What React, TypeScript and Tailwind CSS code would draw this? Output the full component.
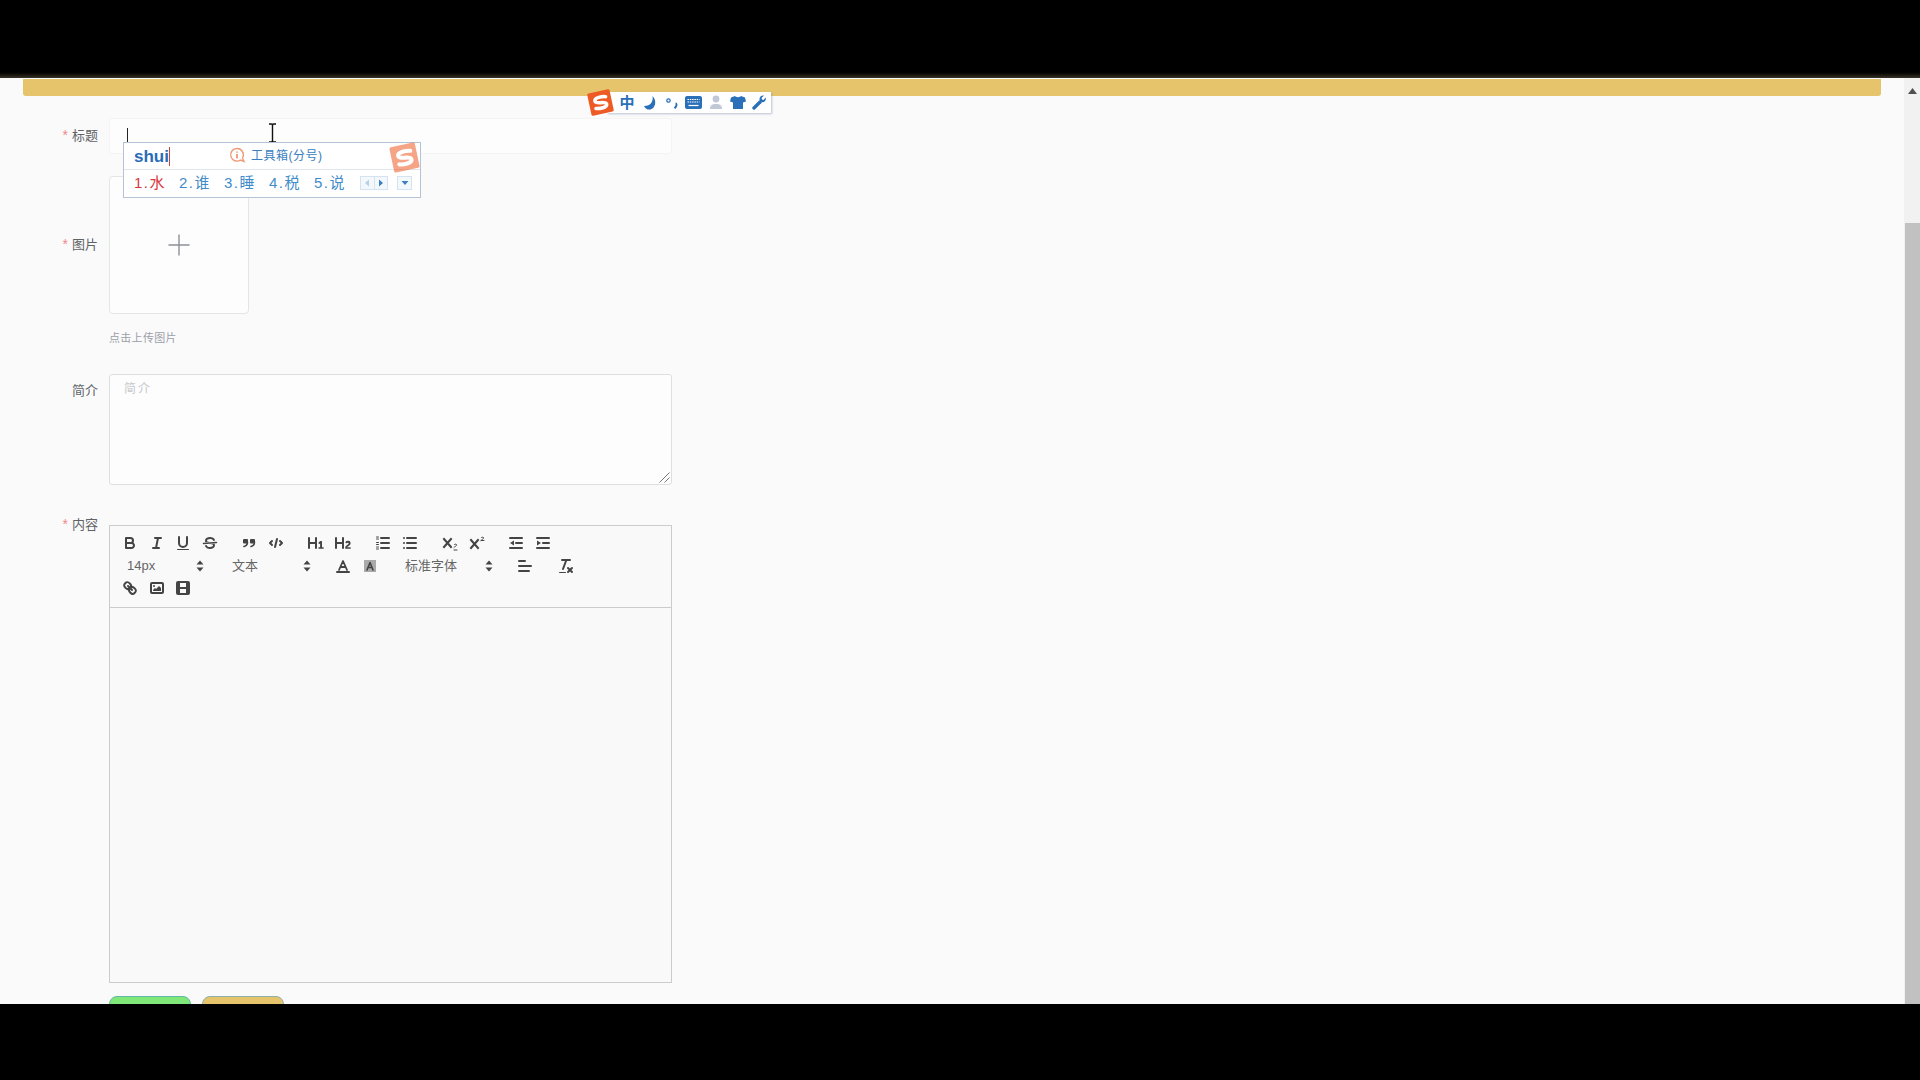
import React from "react";

const cjk = "font-['Liberation_Sans','Noto_Sans_CJK_SC',sans-serif]";

function Q({ children, w = 26.5 }: { children: React.ReactNode; w?: number }) {
  return (
    <span className="flex items-center justify-center h-[22px] shrink-0" style={{ width: w }}>
      <svg width="18" height="18" viewBox="0 0 18 18" fill="none" stroke="#444" strokeWidth="2" strokeLinecap="round" strokeLinejoin="round">
        {children}
      </svg>
    </span>
  );
}

function Fill({ d }: { d: string }) {
  return <path d={d} fill="#444" stroke="none" />;
}

function Arrows() {
  return (
    <svg width="8" height="12" viewBox="0 0 8 12" fill="#444">
      <polygon points="4,0.5 7.5,4.5 0.5,4.5" />
      <polygon points="4,11.5 7.5,7.5 0.5,7.5" />
    </svg>
  );
}

function Picker({ label, w, arrowRight, pl }: { label: string; w: number; arrowRight: number; pl: number }) {
  return (
    <span className="relative flex items-center h-[22px] shrink-0 text-[13px] text-[#666]" style={{ width: w, paddingLeft: pl }}>
      <span>{label}</span>
      <span className="absolute top-[5px] flex" style={{ right: arrowRight }}>
        <Arrows />
      </span>
    </span>
  );
}

function SLogo({ size, opacity = 1 }: { size: number; opacity?: number }) {
  return (
    <svg width={size} height={size} viewBox="0 0 28 28" style={{ opacity }}>
      <g transform="rotate(-12 14 14)">
        <rect x="3" y="3" width="22" height="22" rx="1.5" fill="#ee5a24" />
        <path d="M20 9.5C17 8.6 9 8 9 11.6c0 3.6 10.5 1.6 10.5 5.2 0 3.4-7.5 3-11 2" fill="none" stroke="#fff" strokeWidth="3.4" strokeLinecap="round" />
      </g>
    </svg>
  );
}

function Label({ text, star = true }: { text: string; star?: boolean }) {
  return (
    <div className="w-[75px] mr-[11px] shrink-0 text-right text-[13px] leading-[18px] text-[#606266]">
      {star && <span className="text-[#f08a8a] text-[14px] mr-[4px]">*</span>}
      {text}
    </div>
  );
}

function Toolbar() {
  return (
    <div className="h-[82px] border-b border-[#ccc] pl-[7px] pt-[6px] flex flex-col">
      <div className="flex h-[22px] items-center">
        <Q><path d="M5,4H9.5A2.5,2.5,0,0,1,12,6.5v0A2.5,2.5,0,0,1,9.5,9H5V4Z" /><path d="M5,9h5.5A2.5,2.5,0,0,1,13,11.5v0A2.5,2.5,0,0,1,10.5,14H5V9Z" /></Q>
        <Q><line x1="7" x2="13" y1="4" y2="4" /><line x1="5" x2="11" y1="14" y2="14" /><line x1="8" x2="10" y1="14" y2="4" /></Q>
        <Q><path d="M5,3V9a4,4,0,0,0,4,4H9a4,4,0,0,0,4-4V3" /><rect x="3" y="15" width="12" height="1" rx=".5" fill="#444" stroke="none" /></Q>
        <Q>
          <line x1="15.5" x2="2.5" y1="8.5" y2="9.5" strokeWidth="1.5" />
          <Fill d="M9.007,8C6.542,7.791,6,7.519,6,6.5,6,5.792,7.283,5,9,5c1.571,0,2.765.679,2.969,1.309a1,1,0,0,0,1.9-.617C13.356,4.106,11.354,3,9,3,6.2,3,4,4.538,4,6.5a3.2,3.2,0,0,0,.5,1.843Z" />
          <Fill d="M8.984,10C11.457,10.208,12,10.479,12,11.5c0,.708-1.283,1.5-3,1.5-1.571,0-2.765-.679-2.969-1.309a1,1,0,1,0-1.9.617C4.644,13.894,6.646,15,9,15c2.8,0,5-1.538,5-3.5a3.2,3.2,0,0,0-.5-1.843Z" />
        </Q>
        <span className="w-[13px] shrink-0" />
        <Q>
          <rect x="3" y="5" width="5" height="4.5" rx="1" fill="#444" stroke="none" />
          <rect x="10" y="5" width="5" height="4.5" rx="1" fill="#444" stroke="none" />
          <path d="M7.5,8C7.5,10.5,6,12,4,12.5" strokeWidth="1.6" />
          <path d="M14.5,8C14.5,10.5,13,12,11,12.5" strokeWidth="1.6" />
        </Q>
        <Q><polyline points="5 7 3 9 5 11" /><polyline points="13 7 15 9 13 11" /><line x1="10" x2="8" y1="5" y2="13" /></Q>
        <span className="w-[14px] shrink-0" />
        <Q><Fill d="M10,4V14a1,1,0,0,1-2,0V10H3v4a1,1,0,0,1-2,0V4A1,1,0,0,1,3,4V8H8V4a1,1,0,0,1,2,0Zm6.06787,9.209H14.98975V7.59863a.54085.54085,0,0,0-.605-.60547h-.62744a1.01119,1.01119,0,0,0-.748.29688L11.645,8.56641a.5435.5435,0,0,0-.022.8584l.28613.30762a.53861.53861,0,0,0,.84717.0332l.09912-.08789a1.2137,1.2137,0,0,0,.2417-.35254h.02246s-.01123.30859-.01123.60547V13.209H12.041a.54085.54085,0,0,0-.605.60547v.43945a.54085.54085,0,0,0,.605.60547h4.02686a.54085.54085,0,0,0,.605-.60547v-.43945A.54085.54085,0,0,0,16.06787,13.209Z" /></Q>
        <Q><Fill d="M16.73975,13.81445v.43945a.54085.54085,0,0,1-.605.60547H11.855a.58392.58392,0,0,1-.64893-.60547V14.0127c0-2.90527,3.39941-3.42187,3.39941-4.55469a.77675.77675,0,0,0-.84717-.78125,1.17684,1.17684,0,0,0-.83594.38477c-.2749.26367-.561.374-.85791.13184l-.4292-.34082c-.30811-.24219-.38525-.51758-.1543-.81445a2.97155,2.97155,0,0,1,2.45361-1.17676,2.45393,2.45393,0,0,1,2.68408,2.40918c0,2.45312-3.1792,2.92676-3.27832,3.93848h2.79443A.54085.54085,0,0,1,16.73975,13.81445ZM9,3A.99974.99974,0,0,0,8,4V8H3V4A1,1,0,0,0,1,4V14a1,1,0,0,0,2,0V10H8v4a1,1,0,0,0,2,0V4A.99974.99974,0,0,0,9,3Z" /></Q>
        <span className="w-[14px] shrink-0" />
        <Q>
          <line x1="7" x2="15" y1="4" y2="4" /><line x1="7" x2="15" y1="9" y2="9" /><line x1="7" x2="15" y1="14" y2="14" />
          <line x1="2.5" x2="4.5" y1="3" y2="3" strokeWidth="1" /><line x1="2.5" x2="4.5" y1="5" y2="5" strokeWidth="1" />
          <line x1="2.5" x2="4.5" y1="8.5" y2="8.5" strokeWidth="1" /><line x1="2.5" x2="4.5" y1="10.5" y2="10.5" strokeWidth="1" />
          <line x1="2.5" x2="4.5" y1="13" y2="13" strokeWidth="1" /><line x1="2.5" x2="4.5" y1="15" y2="15" strokeWidth="1" />
        </Q>
        <Q>
          <line x1="6" x2="15" y1="4" y2="4" /><line x1="6" x2="15" y1="9" y2="9" /><line x1="6" x2="15" y1="14" y2="14" />
          <line x1="3" x2="3" y1="4" y2="4" /><line x1="3" x2="3" y1="9" y2="9" /><line x1="3" x2="3" y1="14" y2="14" />
        </Q>
        <span className="w-[14px] shrink-0" />
        <Q>
          <path d="M3,5 L10,13 M10,5 L3,13" strokeWidth="2" strokeLinecap="square" />
          <path d="M13,13.5c1-1.2,2.6-1.6,2.6-2.6 0-1-1.9-1-2.4-.2M13,16h3" strokeWidth="1" />
        </Q>
        <Q>
          <path d="M3,6 L10,14 M10,6 L3,14" strokeWidth="2" strokeLinecap="square" />
          <path d="M13,6.5h3M13,6.5c1-1.2,2.6-1.6,2.6-2.6 0-1-1.9-1-2.4-.2" strokeWidth="1" />
        </Q>
        <span className="w-[13px] shrink-0" />
        <Q>
          <line x1="3" x2="15" y1="14" y2="14" /><line x1="3" x2="15" y1="4" y2="4" /><line x1="9" x2="15" y1="9" y2="9" />
          <polygon points="7 6.5 3 9 7 11.5" fill="#444" stroke="none" />
        </Q>
        <Q>
          <line x1="3" x2="15" y1="14" y2="14" /><line x1="3" x2="15" y1="4" y2="4" /><line x1="9" x2="15" y1="9" y2="9" />
          <polygon points="3 6.5 7 9 3 11.5" fill="#444" stroke="none" />
        </Q>
      </div>
      <div className="flex h-[23px] items-center">
        <Picker label="14px" w={102} pl={10} arrowRight={15} />
        <Picker label="文本" w={111} pl={13} arrowRight={19} />
        <Q><path d="M5,13 L9,4 L13,13 M6.5,10h5" strokeWidth="1.8" /><line x1="3" x2="15" y1="15" y2="15" stroke="#444" /></Q>
        <Q>
          <rect x="3" y="3" width="12" height="12" fill="#aaa" stroke="none" />
          <path d="M6,13 L9,5.5 L12,13 M7,10.5h4" strokeWidth="1.6" />
        </Q>
        <Picker label="标准字体" w={129} pl={22} arrowRight={19} />
        <Q><line x1="3" x2="15" y1="9" y2="9" /><line x1="3" x2="13" y1="14" y2="14" /><line x1="3" x2="9" y1="4" y2="4" /></Q>
        <span className="w-[14px] shrink-0" />
        <Q>
          <line x1="5" x2="13" y1="3" y2="3" />
          <line x1="6" x2="9.35" y1="12" y2="3" />
          <line x1="11" x2="15" y1="11" y2="15" />
          <line x1="15" x2="11" y1="11" y2="15" />
          <rect x="2" y="15" width="7" height="1" rx=".5" fill="#444" stroke="none" />
        </Q>
      </div>
      <div className="flex h-[22px] items-center">
        <Q>
          <line x1="7" x2="11" y1="7" y2="11" />
          <path d="M8.9,4.577a3.476,3.476,0,0,1,.36,4.679A3.476,3.476,0,0,1,4.577,8.9C3.185,7.5,2.035,6.4,4.217,4.217S7.5,3.185,8.9,4.577Z" />
          <path d="M13.423,9.1a3.476,3.476,0,0,0-4.679-.36,3.476,3.476,0,0,0,.36,4.679c1.392,1.392,2.5,2.542,4.679.36S14.815,10.5,13.423,9.1Z" />
        </Q>
        <Q>
          <rect x="3" y="4" width="12" height="10" rx="1" />
          <circle cx="6" cy="7" r="1" fill="#444" stroke="none" />
          <polyline points="5 12 5 11 7 9 8 10 11 7 13 9 13 12 5 12" fill="#444" stroke="none" />
        </Q>
        <Q>
          <rect x="3" y="3" width="12" height="12" rx="1" />
          <rect x="4" y="4" width="2" height="10" fill="#444" stroke="none" />
          <rect x="12" y="4" width="2" height="10" fill="#444" stroke="none" />
          <rect x="5" y="8" width="8" height="2" fill="#444" stroke="none" />
        </Q>
      </div>
    </div>
  );
}

function Ime() {
  const c: [string, string][] = [["1.", "水"], ["2.", "谁"], ["3.", "睡"], ["4.", "税"], ["5.", "说"]];
  return (
    <div className="absolute left-[123px] top-[142px] w-[298px] h-[56px] bg-white border border-[#b4c4d6] flex flex-col">
      <div className="h-[27px] mx-0 border-b border-[#dfe6ee] flex items-center pl-[10px] relative">
        <span className="text-[17px] font-bold text-[#2a6cb8] leading-none">shui</span>
        <span className="w-px h-[19px] bg-[#d0404a]" />
        <svg className="absolute left-[105px] top-[4px]" width="17" height="17" viewBox="0 0 17 17" fill="none" stroke="#ee9a78" strokeWidth="1.4">
          <path d="M8 1.5a6.3 6.3 0 1 0 3.5 11.5l3.5 1.5-1.5-3.5A6.3 6.3 0 0 0 8 1.5Z" />
          <path d="M8 7v4.5M8 4.5v1.2" strokeWidth="1.8" />
        </svg>
        <span className="absolute left-[127px] top-[5px] text-[12px] leading-[16px] text-[#3b7ec0] tracking-[0.5px]">工具箱(分号)</span>
        <span className="absolute -right-[1px] -top-[2px] flex">
          <SLogo size={33} opacity={0.55} />
        </span>
      </div>
      <div className="flex-1 flex items-center pl-[10px] pb-[2px] relative">
        {c.map(([n, t], i) => (
          <span key={n} className={`w-[45px] shrink-0 text-[15px] leading-none tracking-[1.5px] ${i === 0 ? "text-[#d9363e]" : "text-[#3f8ccb]"}`}>
            {n}
            {t}
          </span>
        ))}
        <span className="absolute left-[236px] top-[6px] w-[28px] h-[14px] border border-[#d5e3f0] bg-[#f2f8fc] flex">
          <span className="flex-1 border-r border-[#d5e3f0] flex items-center justify-center">
            <svg width="6" height="8" viewBox="0 0 6 8"><polygon points="5,0.5 5,7.5 1,4" fill="#b9d0e4" /></svg>
          </span>
          <span className="flex-1 flex items-center justify-center">
            <svg width="6" height="8" viewBox="0 0 6 8"><polygon points="1,0.5 1,7.5 5,4" fill="#3d80bd" /></svg>
          </span>
        </span>
        <span className="absolute left-[273px] top-[6px] w-[15px] h-[14px] border border-[#d5e3f0] bg-[#f2f8fc] flex items-center justify-center">
          <svg width="8" height="6" viewBox="0 0 8 6"><polygon points="0.5,1 7.5,1 4,5" fill="#3d80bd" /></svg>
        </span>
      </div>
    </div>
  );
}

function ImeBar() {
  const b = "#2a70b8";
  return (
    <div className="absolute left-[587px] top-[89px] h-[27px] w-[184px] flex items-center">
      <span className="absolute left-[20px] top-[3px] w-[164px] h-[21px] bg-white shadow-[1px_1px_2px_rgba(120,140,170,0.5)]" />
      <span className="relative flex -ml-[1px]"><SLogo size={29} /></span>
      <span className="relative ml-[3px] text-[15px] font-bold leading-none w-[18px] text-center" style={{ color: b }}>中</span>
      <svg className="relative ml-[6px]" width="16" height="16" viewBox="0 0 16 16"><path d="M10.5 1C11.5 6 9 11 2 11c1.5 3 4 4 6.5 3.5C13 13.5 15.5 6 10.5 1Z" fill={b} /></svg>
      <svg className="relative ml-[7px]" width="14" height="14" viewBox="0 0 14 14" fill="none"><circle cx="3.5" cy="4.5" r="1.7" stroke={b} strokeWidth="1.2" /><path d="M10.5 7.5c1.3 0 1.3 1.8 0 3.8l-1 1" stroke={b} strokeWidth="2" /></svg>
      <svg className="relative ml-[6px]" width="17" height="13" viewBox="0 0 17 13"><rect x="0.5" y="0.5" width="16" height="12" rx="1.2" fill={b} stroke={b} /><path d="M2.5 3.5h12M2.5 6h12" stroke="#fff" strokeWidth="1.2" strokeDasharray="1.5 0.8" /><path d="M3.5 9.5h10" stroke="#fff" strokeWidth="1.2" /></svg>
      <svg className="relative ml-[7px]" width="14" height="15" viewBox="0 0 14 15" fill="#bfc8d4"><circle cx="7" cy="4" r="3.4" /><path d="M1 14c0-4 2.5-5 6-5s6 1 6 5Z" /></svg>
      <svg className="relative ml-[7px]" width="16" height="15" viewBox="0 0 16 15" fill={b}><path d="M5 1 1 2.5 0 6.5l3 1V14h10V7.5l3-1-1-4L11 1c-.5 1.5-5.5 1.5-6 0Z" /></svg>
      <svg className="relative ml-[6px]" width="15" height="15" viewBox="0 0 15 15" fill="none"><path d="M2 13 8 7" stroke={b} strokeWidth="3.4" strokeLinecap="round" /><path d="M13.8 2.5 11.5 5 10 4.5 9.5 3l2.5-2.4C9.5 0 7 2 7.5 5l1.5 2c3 1 5.5-1.5 4.8-4.5Z" fill={b} /></svg>
    </div>
  );
}

export default function App() {
  return (
    <div className={`relative w-[1920px] h-[1080px] bg-black overflow-hidden flex flex-col ${cjk}`}>
      <div className="h-[78px] shrink-0 bg-gradient-to-b from-black from-[90%] to-[#3a3428]" />
      <div className="h-[926px] shrink-0 flex">
        <div className="flex-1 bg-[#fafafb] pt-px px-[23px] overflow-hidden">
          <div className="h-[17px] w-[1858px] bg-[#e6c46c] rounded-b-[3px]" />
          <div className="mt-[22px] flex items-center">
            <div className="pb-[1px]"><Label text="标题" /></div>
            <div className="w-[563px] h-[36px] bg-[#fdfdfd] border border-[#f4f4f5] rounded-[3px]" />
          </div>
          <div className="mt-[22px] flex items-center">
            <div className="pb-[2px]"><Label text="图片" /></div>
            <div className="w-[140px] h-[138px] bg-[#fdfdfd] border border-[#e4e5e7] rounded-[4px] flex items-center justify-center pb-px">
              <svg width="24" height="24" viewBox="0 0 24 24" stroke="#8c9096" strokeWidth="1.4"><path d="M12 1.5v21M1.5 12h21" /></svg>
            </div>
          </div>
          <div className="mt-[16px] ml-[86px] h-[16px] text-[11px] tracking-[0.3px] leading-[16px] text-[#9a9fa8]">点击上传图片</div>
          <div className="mt-[28px] flex items-start">
            <div className="pt-[8px]"><Label text="简介" star={false} /></div>
            <div className="relative w-[563px] h-[111px] bg-[#fdfdfd] border border-[#dedfe1] rounded-[3px] pl-[14px] pt-[6px] text-[12px] leading-[16px] tracking-[2px] text-[#c8c9cc]">
              简介
              <svg className="absolute right-[1px] bottom-[1px]" width="12" height="12" viewBox="0 0 12 12" stroke="#777" strokeWidth="1"><path d="M1.5 11.5 11.5 1.5M6.5 11.5 11.5 6.5" /></svg>
            </div>
          </div>
          <div className="mt-[40px] flex items-start">
            <div className="-mt-[10px]"><Label text="内容" /></div>
            <div className="w-[563px] h-[458px] border border-[#ccc] bg-[#f9f9f9] text-[#444]">
              <Toolbar />
            </div>
          </div>
          <div className="mt-[13px] ml-[86px] flex gap-[11px]">
            <div className="w-[82px] h-[40px] rounded-[8px] bg-[#80e878] border border-[#62b8a8]" />
            <div className="w-[82px] h-[40px] rounded-[8px] bg-[#e6c46c] border border-[#8ab0a8]" />
          </div>
        </div>
        <div className="w-[16px] shrink-0 bg-[#f1f1f1] flex flex-col items-center">
          <div className="h-[24px] flex items-center justify-center pt-[1px]">
            <svg width="9" height="6" viewBox="0 0 9 6"><polygon points="4.5,0 9,6 0,6" fill="#505050" /></svg>
          </div>
          <div className="mt-[121px] flex-1 w-[15px] ml-px bg-[#c1c1c1]" />
        </div>
      </div>
      <div className="flex-1" />
      <div className="absolute left-[127px] top-[128px] w-px h-[14px] bg-[#222]" />
      <svg className="absolute left-[268px] top-[123px]" width="9" height="20" viewBox="0 0 9 20" fill="none" stroke="#111" strokeWidth="1.4">
        <path d="M1 1h2.5c1 0 1 1 1 2v14c0 1 0 2-1 2H1M8 1H5.5c-1 0-1 1-1 2v14c0 1 0 2 1 2H8" />
      </svg>
      <Ime />
      <ImeBar />
    </div>
  );
}
